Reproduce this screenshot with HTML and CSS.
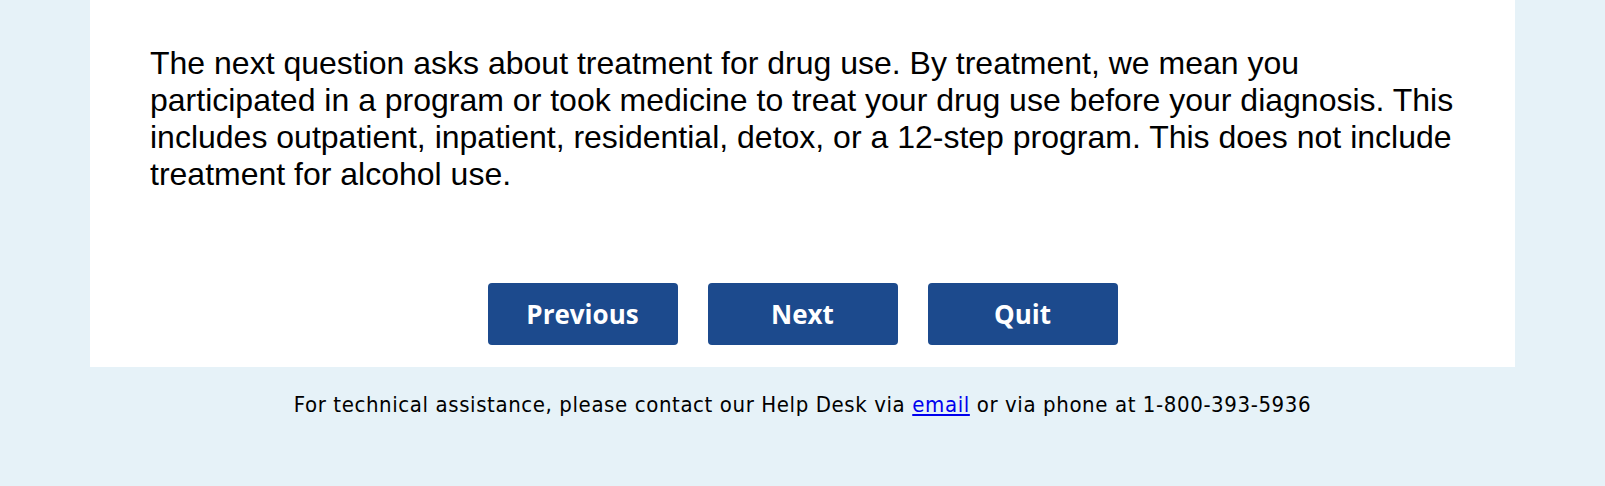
FILE: index.html
```html
<!DOCTYPE html>
<html lang="en">

<head>
    <meta charset="UTF-8">
    <meta name="viewport" content="width=device-width, initial-scale=1.0">
    <title>Survey</title>
    <link rel="stylesheet" href="styles.css">
</head>

<body>
    <div class="survey-panel">
        <p class="question-intro">The next question asks about treatment for drug use. By treatment, we mean you
            participated in a program or took medicine to treat your drug use before your diagnosis. This
            includes outpatient, inpatient, residential, detox, or a 12-step program. This does not include
            treatment for alcohol use.</p>

        <!-- Botoes de navegacao -->
        <div class="nav-buttons">
            <button type="button" class="nav-button">Previous</button>
            <button type="button" class="nav-button">Next</button>
            <button type="button" class="nav-button">Quit</button>
        </div>
    </div>

    <p class="help-footer">For technical assistance, please contact our Help Desk via <a href="#">email</a> or via phone at 1-800-393-5936</p>
</body>

</html>
```

FILE: styles.css
```css
body {
    background-color: #e6f2f8;
    margin: 0;
    font-family: "Liberation Sans", Arial, sans-serif;
}

.survey-panel {
    background-color: #ffffff;
    width: 1425px;
    margin: 0 auto;
    padding: 45px 60px 22px 60px;
    box-sizing: border-box;
}

.question-intro {
    margin: 0;
    font-size: 32px;
    line-height: normal;
    color: #000;
}

.nav-buttons {
    display: flex;
    justify-content: center;
    gap: 30px;
    margin-top: 90px;
}

.nav-button {
    width: 190px;
    height: 62px;
    background-color: #1c4a8d;
    color: #fff;
    border: none;
    border-radius: 4px;
    font-family: "Open Sans", sans-serif;
    font-weight: bold;
    font-size: 26px;
    cursor: pointer;
}

.help-footer {
    margin: 25px 0 0 0;
    text-align: center;
    font-family: "DejaVu Sans Condensed", "DejaVu Sans", sans-serif;
    font-size: 22px;
    letter-spacing: 0.6px;
    color: #000;
}

.help-footer a {
    color: #0000ee;
}
```
